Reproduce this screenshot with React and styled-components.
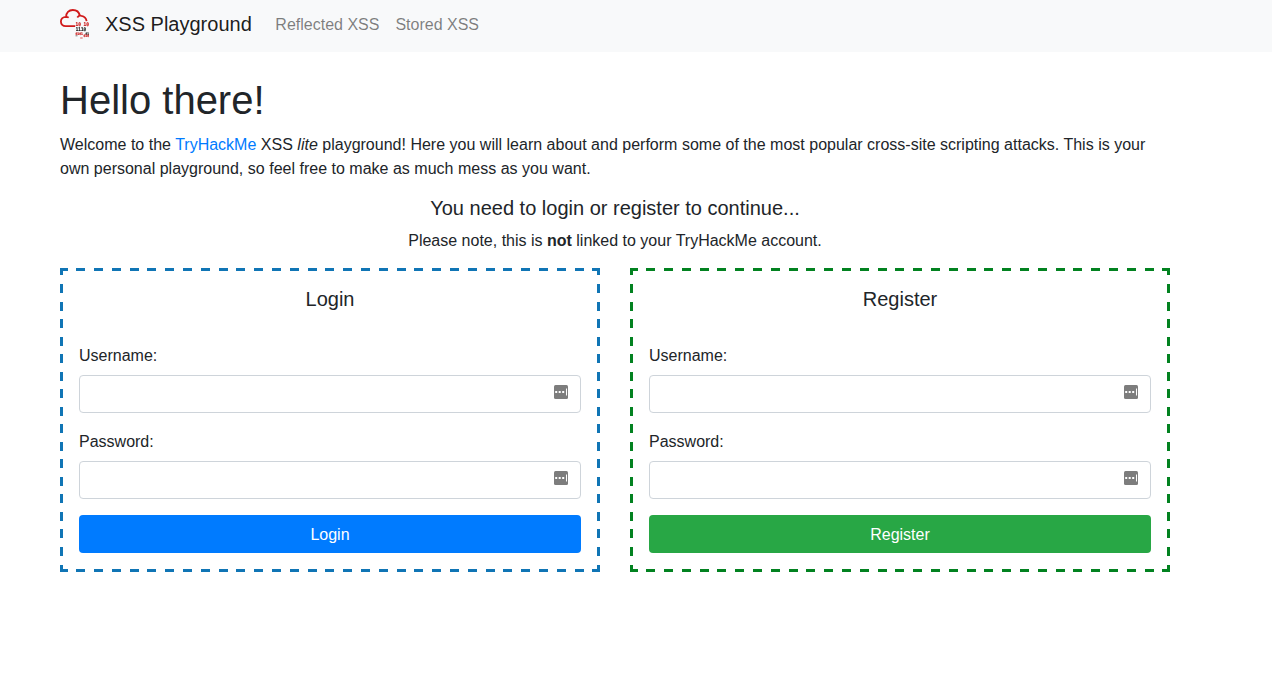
import React from "react";
import styled, { createGlobalStyle } from "styled-components";

const GlobalStyle = createGlobalStyle`
  *, *::before, *::after { box-sizing: border-box; }
  body {
    margin: 0;
    background: #fff;
    color: #212529;
    font: 400 16px/24px "Liberation Sans", Arial, sans-serif;
  }
`;

const Navbar = styled.nav`
  background: #f8f9fa;
  height: 52px;
  padding-bottom: 3px;
  display: flex;
`;

const Container = styled.div`
  width: 1110px;
  margin-left: 60px;
`;

const NavInner = styled(Container)`
  display: flex;
  align-items: center;
`;

const Brand = styled.a`
  display: flex;
  align-items: center;
  gap: 15px;
  padding-bottom: 1px;
  font-size: 20px;
  line-height: 30px;
  color: rgba(0, 0, 0, 0.9);
  margin-right: 15.6px;
`;

const NavLink = styled.a`
  padding: 8px;
  color: rgba(0, 0, 0, 0.5);
`;

const Title = styled.h1`
  margin: 24px 0 8px;
  font-size: 40px;
  font-weight: 400;
  line-height: 48px;
`;

const Paragraph = styled.p`
  margin: 0 0 15px;
  padding-top: 1px;
`;

const Intro = styled(Paragraph)`
  word-spacing: 0.04px;
`;

const Link = styled.a`
  color: #007bff;
`;

const Heading = styled.h5`
  margin: 0 0 8px;
  font-size: 20px;
  font-weight: 400;
  line-height: 24px;
  text-align: center;
`;

const Note = styled(Paragraph)`
  text-align: center;
`;

const Panels = styled.div`
  display: grid;
  grid-template-columns: 1fr 1fr;
  gap: 30px;
`;

const dashes = (angle, color, period) =>
  `repeating-linear-gradient(${angle}, ${color} 0 7.5px, transparent 7.5px ${period - 1.5}px, ${color} ${period - 1.5}px ${period}px)`;

const Panel = styled.form`
  height: 304px;
  padding: 19px;
  background-image:
    ${(p) => dashes("90deg", p.$color, 17.8)},
    ${(p) => dashes("90deg", p.$color, 17.8)},
    ${(p) => dashes("180deg", p.$color, 17.53)},
    ${(p) => dashes("180deg", p.$color, 17.53)};
  background-size: 100% 3px, 100% 3px, 3px 100%, 3px 100%;
  background-position: top, bottom, left, right;
  background-repeat: no-repeat;
`;

const PanelTitle = styled(Heading)`
  margin-bottom: 32px;
`;

const Field = styled.div`
  margin-bottom: 16px;
`;

const Label = styled.label`
  display: block;
  padding-top: 1px;
  margin-bottom: 7px;
`;

const InputBox = styled.div`
  display: flex;
  align-items: center;
  height: 38px;
  border: 1px solid #ced4da;
  border-radius: 4px;
  padding: 0 12px 4px;
`;

const Input = styled.input`
  flex: 1;
  min-width: 0;
  border: 0;
  outline: 0;
  background: transparent;
  font: inherit;
`;

const Button = styled.button`
  display: block;
  width: 100%;
  height: 38px;
  padding: 2px 6px 0;
  border: 0;
  border-radius: 4px;
  background: ${(p) => p.$color};
  color: #fff;
  font: inherit;
`;

const LogoSvg = styled.svg`
  opacity: 0.99;
  will-change: opacity;
`;

const Digits = styled.text`
  font-family: "DejaVu Sans Mono", monospace;
  font-weight: 700;
  font-size: ${(p) => p.$size}px;
  stroke: currentColor;
  stroke-width: 0.2px;
  color: ${(p) => p.fill};
`;

const CloudLogo = () => (
  <LogoSvg width="30" height="30" viewBox="0 0 30 30">
    <path
      d="M15.200 17.100H5.800C2.700 17.100.9 15.100.9 12.500c0-2.800 2-4.700 5.200-4.700C6.100 3.700 8.800 1 12.800 1c3.900 0 6.300 2.100 6.900 5.700M6 7.800c1.100 0 1.900.2 2.700.8M17.300 8.500c1-1.500 2.400-2 4.100-1.700 2.800.4 4.800 2.300 5.200 5.300"
      fill="none" stroke="#d01818" strokeWidth="1.800"
    />
    <Digits $size="5" x="15.600" y="17" textLength="5.400" lengthAdjust="spacingAndGlyphs" fill="#c91c1c">10</Digits>
    <Digits $size="5" x="23.600" y="17" textLength="5.400" lengthAdjust="spacingAndGlyphs" fill="#c91c1c">10</Digits>
    <Digits $size="5" x="15.800" y="22" textLength="10.200" lengthAdjust="spacingAndGlyphs" fill="#222">1110</Digits>
    <Digits $size="3.500" x="15.500" y="25.500" textLength="7.500" lengthAdjust="spacingAndGlyphs" fill="#c91c1c">0101</Digits>
    <Digits $size="3.500" x="25.500" y="25.500" textLength="3.500" lengthAdjust="spacingAndGlyphs" fill="#222">01</Digits>
    <Digits $size="3.500" x="23.500" y="28.300" textLength="5.500" lengthAdjust="spacingAndGlyphs" fill="#c91c1c">010</Digits>
    <path d="M15.500 26.800h2" stroke="#777" />
    <path d="M20.200 29h2.500" stroke="#dc5555" />
  </LogoSvg>
);

const FillIcon = () => (
  <svg width="14" height="14" viewBox="0 0 14 14">
    <rect width="14" height="14" rx="1.500" fill="#7d7d7d" />
    <path d="M1.200 6h2v2h-2zM4.700 6h2v2h-2zM8.200 6h2v2h-2zM12 3.500h1v7h-1z" fill="#fff" />
  </svg>
);

const AuthPanel = ({ title, border, button }) => (
  <Panel $color={border}>
    <PanelTitle>{title}</PanelTitle>
    {["Username:", "Password:"].map((label) => (
      <Field key={label}>
        <Label>{label}</Label>
        <InputBox>
          <Input type={label === "Password:" ? "password" : "text"} />
          <FillIcon />
        </InputBox>
      </Field>
    ))}
    <Button type="button" $color={button}>{title}</Button>
  </Panel>
);

export default function App() {
  return (
    <>
      <GlobalStyle />
      <Navbar>
        <NavInner>
          <Brand><CloudLogo />XSS Playground</Brand>
          <NavLink>Reflected XSS</NavLink>
          <NavLink>Stored XSS</NavLink>
        </NavInner>
      </Navbar>
      <Container>
        <Title>Hello there!</Title>
        <Intro>
          Welcome to the <Link>TryHackMe</Link> XSS <em>lite</em> playground! Here you will learn about and perform some of the most popular cross-site scripting attacks. This is your own personal playground, so feel free to make as much mess as you want.
        </Intro>
        <Heading>You need to login or register to continue...</Heading>
        <Note>Please note, this is <b>not</b> linked to your TryHackMe account.</Note>
        <Panels>
          <AuthPanel title="Login" border="#1075b5" button="#007bff" />
          <AuthPanel title="Register" border="#028220" button="#28a745" />
        </Panels>
      </Container>
    </>
  );
}
